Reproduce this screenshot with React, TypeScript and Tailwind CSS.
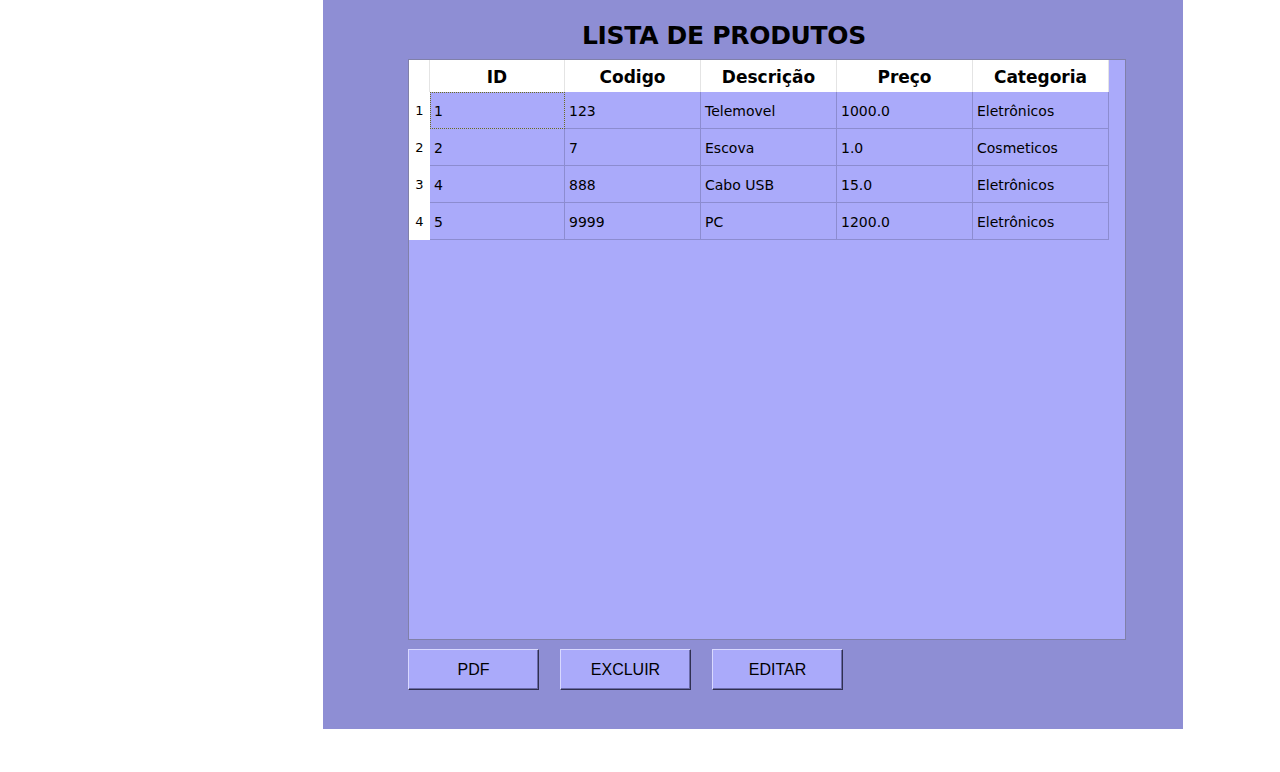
import React from "react";

const rows = [
  ["1", "123", "Telemovel", "1000.0", "Eletrônicos"],
  ["2", "7", "Escova", "1.0", "Cosmeticos"],
  ["4", "888", "Cabo USB", "15.0", "Eletrônicos"],
  ["5", "9999", "PC", "1200.0", "Eletrônicos"],
];
const headers = ["ID", "Codigo", "Descrição", "Preço", "Categoria"];

export default function App() {
  return (
    <div className="w-[1280px] h-[772px] bg-white flex" style={{ fontFamily: '"DejaVu Sans", sans-serif' }}>
      <div className="ml-[323px] w-[860px] h-[729px] bg-[#8e8ed4] flex flex-col">
        <div className="h-[59px] flex items-center justify-center pt-[12px] pr-[58px]">
          <h1 className="text-[25px] font-bold text-black tracking-[-0.3px]">LISTA DE PRODUTOS</h1>
        </div>
        <div className="ml-[85px] w-[718px] h-[581px] border border-[#8080a8] bg-[#aaaafa] flex">
          <div className="w-[21px] flex flex-col">
            <div className="h-[32px] bg-white border-r border-[#e4e4e4]"></div>
            {rows.map((_, i) => (
              <div key={i} className="h-[37px] bg-white flex items-center justify-center text-[13px] text-black">
                {i + 1}
              </div>
            ))}
          </div>
          <div className="flex flex-col">
            <div className="flex h-[32px] bg-white">
              {headers.map((h, j) => (
                <div
                  key={h}
                  className={
                    (j === 0 ? "w-[135px]" : "w-[136px]") +
                    " border-r border-[#e4e4e4] flex items-center justify-center pt-[3px] text-[17px] font-bold text-black"
                  }
                >
                  {h}
                </div>
              ))}
            </div>
            {rows.map((r, i) => (
              <div key={i} className="flex h-[37px]">
                {r.map((c, j) => (
                  <div
                    key={j}
                    className={
                      (j === 0 ? "w-[135px]" : "w-[136px]") +
                      (i === 0 && j === 0
                        ? " border border-dotted border-[#6b6b20] flex items-center pl-[3px] pt-[1px] text-[14px] text-black"
                        : " border-r border-b border-[#8c8cd0] flex items-center pl-[4px] pt-[2px] text-[14px] text-black")
                    }
                  >
                    {c}
                  </div>
                ))}
              </div>
            ))}
          </div>
        </div>
        <div className="ml-[85px] mt-[9px] flex gap-[21px]" style={{ fontFamily: '"Liberation Sans", sans-serif' }}>
          {["PDF", "EXCLUIR", "EDITAR"].map((b) => (
            <button
              key={b}
              className="w-[131px] h-[41px] bg-[#aaaafa] border border-t-[#d8d8ff] border-l-[#d8d8ff] border-b-[#303050] border-r-[#303050] shadow-[inset_-1px_-1px_0_#6a6aa8] text-[16px] text-black flex items-center justify-center"
            >
              {b}
            </button>
          ))}
        </div>
      </div>
    </div>
  );
}
